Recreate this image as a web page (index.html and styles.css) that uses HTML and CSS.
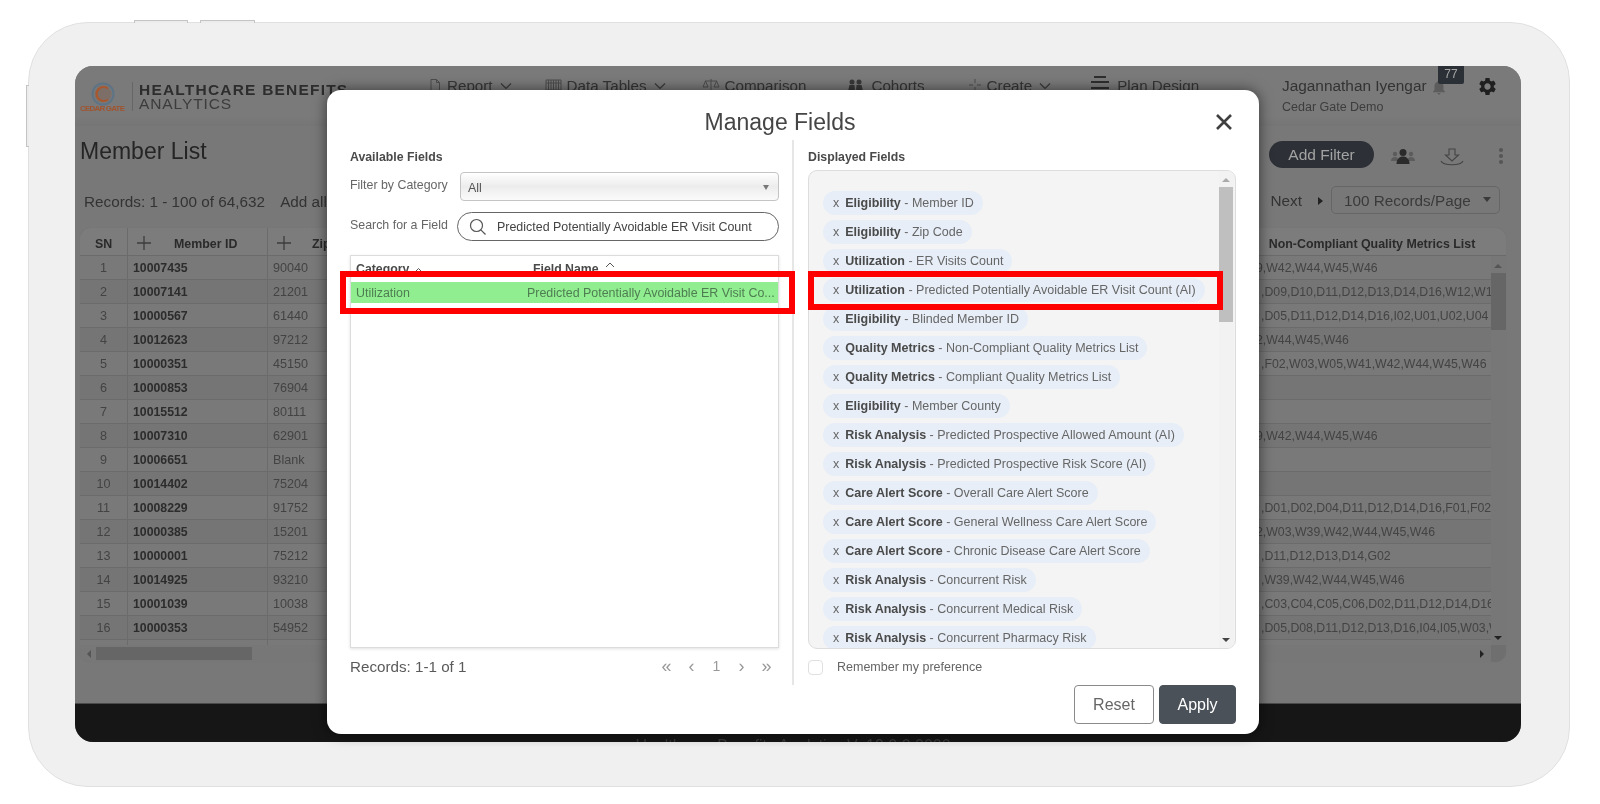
FILE: index.html
```html
<!DOCTYPE html>
<html lang="en">
<head>
<meta charset="utf-8">
<title>Manage Fields</title>
<link rel="stylesheet" href="styles.css">
</head>
<body>
<div class="bezel">
  <span class="hw hw-top1"></span><span class="hw hw-top2"></span><span class="hw hw-left"></span>
  <div class="screen">
    <header class="topbar">
      <svg class="logo" width="46" height="36" viewBox="0 0 46 36">
        <circle cx="23" cy="13" r="10.5" fill="none" stroke="#5d7386" stroke-width="2"/>
        <circle cx="23" cy="13" r="8.5" fill="#7d6f68"/>
        <path d="M28 7.500a7 7 0 1 0 0 11" fill="none" stroke="#a8572f" stroke-width="2.200"/>
        <text x="0" y="30" class="logo-text" textLength="45">CEDAR GATE</text>
      </svg>
      <div class="brand">
        <div class="brand-1">HEALTHCARE BENEFITS</div>
        <div class="brand-2">ANALYTICS</div>
      </div>
      <nav class="nav">
        <span class="nav-item"><svg width="14" height="14" viewBox="0 0 14 14" class="ico"><path d="M3 1.500h5.500L11.500 4.500V12.500H3zM8.500 1.500V4.500H11.500"/></svg>Report<svg class="chev" width="12" height="8" viewBox="0 0 12 8"><path d="M1 1.500L6 6.500L11 1.500"/></svg></span>
        <span class="nav-item"><svg width="17" height="14" viewBox="0 0 17 14" class="ico"><path d="M1 2h15v10H1zM1 5h15M6 2v10M11 2v10M3.500 2v10M8.500 2v10M13.500 2v10"/></svg>Data Tables<svg class="chev" width="12" height="8" viewBox="0 0 12 8"><path d="M1 1.500L6 6.500L11 1.500"/></svg></span>
        <span class="nav-item"><svg width="18" height="14" viewBox="0 0 18 14" class="ico"><path d="M9 1v12M3 3h12M3.500 3L1 9h5zM14.500 3L12 9h5zM5 13h8"/></svg>Comparison</span>
        <span class="nav-item"><svg width="21" height="14" viewBox="0 0 21 14" class="ico-fill"><circle cx="7" cy="4" r="2.500"/><circle cx="14" cy="4" r="2.500"/><path d="M3 13l1.500-6h5l.5 6zM11 13l.5-6h5l1.500 6z"/></svg>Cohorts</span>
        <span class="nav-item"><svg width="14" height="14" viewBox="0 0 14 14" class="ico"><path d="M7 1v4M7 9v4M1 7h4M9 7h4"/></svg>Create<svg class="chev" width="12" height="8" viewBox="0 0 12 8"><path d="M1 1.500L6 6.500L11 1.500"/></svg></span>
        <span class="nav-item"><svg width="18" height="16" viewBox="0 0 18 16" class="ico-bars"><path d="M3 2h12M0 7h18M0 13h18"/></svg>Plan Design</span>
      </nav>
      <div class="user">
        <div class="user-name">Jagannathan Iyengar</div>
        <div class="user-org">Cedar Gate Demo</div>
      </div>
      <svg class="bell" width="18" height="18" viewBox="0 0 24 24"><path d="M12 22c1.100 0 2-.9 2-2h-4c0 1.100.89 2 2 2zm6-6v-5c0-3.070-1.640-5.640-4.500-6.320V4c0-.83-.67-1.500-1.500-1.500s-1.500.67-1.500 1.500v.68C7.630 5.360 6 7.920 6 11v5l-2 2v1h16v-1l-2-2z"/></svg>
      <span class="badge">77</span>
      <svg class="gear" width="21" height="21" viewBox="0 0 24 24"><path d="M19.140 12.940c.04-.3.06-.61.06-.94 0-.32-.02-.64-.07-.94l2.030-1.580c.18-.14.23-.41.12-.61l-1.920-3.320c-.12-.22-.37-.29-.59-.22l-2.390.96c-.5-.38-1.030-.7-1.620-.94l-.36-2.540c-.04-.24-.24-.41-.48-.41h-3.840c-.24 0-.43.17-.47.41l-.36 2.540c-.59.24-1.130.57-1.620.94l-2.390-.96c-.22-.08-.47 0-.59.22L2.740 8.870c-.12.21-.08.47.12.61l2.030 1.580c-.05.3-.09.63-.09.94s.02.64.07.94l-2.030 1.580c-.18.14-.23.41-.12.61l1.920 3.320c.12.22.37.29.59.22l2.390-.96c.5.38 1.030.7 1.620.94l.36 2.540c.05.24.24.41.48.41h3.840c.24 0 .44-.17.47-.41l.36-2.540c.59-.24 1.130-.56 1.620-.94l2.390.96c.22.08.47 0 .59-.22l1.920-3.320c.12-.22.07-.47-.12-.61l-2.010-1.580zM12 15.600c-1.980 0-3.600-1.620-3.600-3.600s1.620-3.600 3.600-3.600 3.600 1.620 3.600 3.600-1.620 3.600-3.600 3.600z"/></svg>
    </header>

    <main class="content">
      <div class="title-row">
        <h1 class="page-title">Member List</h1>
        <button class="add-filter">Add Filter</button>
        <svg class="act-people" width="24" height="18" viewBox="0 0 24 18"><circle cx="4" cy="6" r="2.200" fill="#5c5c5c"/><circle cx="20" cy="6" r="2.200" fill="#5c5c5c"/><path d="M0 13c0-3 2-4 4-4s3 1 3 2v2zM24 13c0-3-2-4-4-4s-3 1-3 2v2z" fill="#5c5c5c"/><circle cx="12" cy="4.500" r="3.500" fill="#2b2b2b"/><path d="M5.500 16c0-5 3-7.500 6.500-7.500s6.500 2.500 6.500 7.500z" fill="#2b2b2b"/></svg>
        <svg class="act-down" width="24" height="18" viewBox="0 0 24 18"><path d="M9 1h6v6h3.500L12 13L5.500 7H9z" fill="none" stroke="#444" stroke-width="1.100"/><path d="M1 13c2 5 20 5 22 0" fill="none" stroke="#444" stroke-width="1.100"/></svg>
        <span class="act-dots"><i></i><i></i><i></i></span>
      </div>
      <div class="records-row">
        <span class="rec-count">Records: 1 - 100 of 64,632</span>
        <span class="rec-add">Add all</span>
        <span class="rec-next">Next</span>
        <span class="tri-right"></span>
        <span class="page-size">100 Records/Page<span class="tri-down"></span></span>
      </div>

      <section class="grid">
        <div class="g-head">
          <div class="c-sn">SN</div>
          <div class="c-id"><svg class="plus" width="16" height="16" viewBox="0 0 16 16"><path d="M8 1v14M1 8h14"/></svg><span class="h-id">Member ID</span></div>
          <div class="c-zip"><svg class="plus" width="16" height="16" viewBox="0 0 16 16"><path d="M8 1v14M1 8h14"/></svg><span class="h-zip">Zip Code</span></div>
          <div class="c-last">Non-Compliant Quality Metrics List</div>
        </div>
        <div class="g-body">
          <div class="g-rows">
            <div class="g-row"><div class="c-sn">1</div><div class="c-id">10007435</div><div class="c-zip">90040</div><div class="c-last"><span class="cut">9</span>,W42,W44,W45,W46</div></div>
            <div class="g-row"><div class="c-sn">2</div><div class="c-id">10007141</div><div class="c-zip">21201</div><div class="c-last">,D09,D10,D11,D12,D13,D14,D16,W12,W13,W14</div></div>
            <div class="g-row"><div class="c-sn">3</div><div class="c-id">10000567</div><div class="c-zip">61440</div><div class="c-last">,D05,D11,D12,D14,D16,I02,U01,U02,U04</div></div>
            <div class="g-row"><div class="c-sn">4</div><div class="c-id">10012623</div><div class="c-zip">97212</div><div class="c-last"><span class="cut">2</span>,W44,W45,W46</div></div>
            <div class="g-row"><div class="c-sn">5</div><div class="c-id">10000351</div><div class="c-zip">45150</div><div class="c-last">,F02,W03,W05,W41,W42,W44,W45,W46</div></div>
            <div class="g-row"><div class="c-sn">6</div><div class="c-id">10000853</div><div class="c-zip">76904</div><div class="c-last"></div></div>
            <div class="g-row"><div class="c-sn">7</div><div class="c-id">10015512</div><div class="c-zip">80111</div><div class="c-last"></div></div>
            <div class="g-row"><div class="c-sn">8</div><div class="c-id">10007310</div><div class="c-zip">62901</div><div class="c-last"><span class="cut">9</span>,W42,W44,W45,W46</div></div>
            <div class="g-row"><div class="c-sn">9</div><div class="c-id">10006651</div><div class="c-zip">Blank</div><div class="c-last"></div></div>
            <div class="g-row"><div class="c-sn">10</div><div class="c-id">10014402</div><div class="c-zip">75204</div><div class="c-last"></div></div>
            <div class="g-row"><div class="c-sn">11</div><div class="c-id">10008229</div><div class="c-zip">91752</div><div class="c-last">,D01,D02,D04,D11,D12,D14,D16,F01,F02</div></div>
            <div class="g-row"><div class="c-sn">12</div><div class="c-id">10000385</div><div class="c-zip">15201</div><div class="c-last"><span class="cut">2</span>,W03,W39,W42,W44,W45,W46</div></div>
            <div class="g-row"><div class="c-sn">13</div><div class="c-id">10000001</div><div class="c-zip">75212</div><div class="c-last">,D11,D12,D13,D14,G02</div></div>
            <div class="g-row"><div class="c-sn">14</div><div class="c-id">10014925</div><div class="c-zip">93210</div><div class="c-last">,W39,W42,W44,W45,W46</div></div>
            <div class="g-row"><div class="c-sn">15</div><div class="c-id">10001039</div><div class="c-zip">10038</div><div class="c-last">,C03,C04,C05,C06,D02,D11,D12,D14,D16,F01</div></div>
            <div class="g-row"><div class="c-sn">16</div><div class="c-id">10000353</div><div class="c-zip">54952</div><div class="c-last">,D05,D08,D11,D12,D13,D16,I04,I05,W03,W05</div></div>
            <div class="g-row"><div class="c-sn"></div><div class="c-id"></div><div class="c-zip"></div><div class="c-last"></div></div>
          </div>
          <div class="v-scroll"><span class="arr-up"></span><span class="v-thumb"></span><span class="arr-down"></span></div>
        </div>
        <div class="h-scroll"><span class="arr-left"></span><span class="h-thumb"></span><span class="arr-right"></span></div>
      </section>
    </main>

    <footer class="footer">Healthcare Benefits Analytics V: 19.0.0.0000</footer>

    <div class="modal">
      <div class="modal-head">
        <h2 class="modal-title">Manage Fields</h2>
        <svg class="modal-close" width="18" height="18" viewBox="0 0 18 18"><path d="M2 2L16 16M16 2L2 16"/></svg>
      </div>
      <div class="modal-body">
        <div class="col-left">
          <div class="col-label">Available Fields</div>
          <div class="form-row form-filter">
            <label class="form-label">Filter by Category</label>
            <div class="select">All<span class="select-arrow"></span></div>
          </div>
          <div class="form-row form-search">
            <label class="form-label">Search for a Field</label>
            <div class="search">
              <svg width="18" height="18" viewBox="0 0 18 18"><circle cx="7.500" cy="7.500" r="6" fill="none" stroke="#555" stroke-width="1.200"/><path d="M11.800 11.800L16.500 16.500" stroke="#555" stroke-width="1.200"/></svg>
              <span>Predicted Potentially Avoidable ER Visit Count</span>
            </div>
          </div>
          <div class="list">
            <div class="list-head">
              <span class="lh-cat">Category<svg width="9" height="6" viewBox="0 0 9 6"><path d="M1 5L4.500 1.500L8 5"/></svg></span>
              <span class="lh-name">Field Name<svg width="10" height="6" viewBox="0 0 10 6"><path d="M1 5L5 1L9 5"/></svg></span>
            </div>
            <div class="list-row"><span class="lr-cat">Utilization</span><span class="lr-name">Predicted Potentially Avoidable ER Visit Co...</span></div>
          </div>
          <div class="list-foot">
            <span class="list-count">Records: 1-1 of 1</span>
            <span class="pager"><span>«</span><span>‹</span><span class="pg-num">1</span><span>›</span><span>»</span></span>
          </div>
        </div>
        <div class="col-divider"></div>
        <div class="col-right">
          <div class="col-label">Displayed Fields</div>
          <div class="chips-box">
            <div class="chips">
              <span class="chip"><i>x</i><b>Eligibility</b> - Member ID</span>
              <span class="chip"><i>x</i><b>Eligibility</b> - Zip Code</span>
              <span class="chip"><i>x</i><b>Utilization</b> - ER Visits Count</span>
              <span class="chip"><i>x</i><b>Utilization</b> - Predicted Potentially Avoidable ER Visit Count (AI)</span>
              <span class="chip"><i>x</i><b>Eligibility</b> - Blinded Member ID</span>
              <span class="chip"><i>x</i><b>Quality Metrics</b> - Non-Compliant Quality Metrics List</span>
              <span class="chip"><i>x</i><b>Quality Metrics</b> - Compliant Quality Metrics List</span>
              <span class="chip"><i>x</i><b>Eligibility</b> - Member County</span>
              <span class="chip"><i>x</i><b>Risk Analysis</b> - Predicted Prospective Allowed Amount (AI)</span>
              <span class="chip"><i>x</i><b>Risk Analysis</b> - Predicted Prospective Risk Score (AI)</span>
              <span class="chip"><i>x</i><b>Care Alert Score</b> - Overall Care Alert Score</span>
              <span class="chip"><i>x</i><b>Care Alert Score</b> - General Wellness Care Alert Score</span>
              <span class="chip"><i>x</i><b>Care Alert Score</b> - Chronic Disease Care Alert Score</span>
              <span class="chip"><i>x</i><b>Risk Analysis</b> - Concurrent Risk</span>
              <span class="chip"><i>x</i><b>Risk Analysis</b> - Concurrent Medical Risk</span>
              <span class="chip"><i>x</i><b>Risk Analysis</b> - Concurrent Pharmacy Risk</span>
            </div>
            <div class="chips-scroll"><span class="cs-up"></span><span class="cs-thumb"></span><span class="cs-down"></span></div>
          </div>
          <label class="remember"><span class="check"></span>Remember my preference</label>
        </div>
      </div>
      <div class="modal-foot">
        <button class="btn-reset">Reset</button>
        <button class="btn-apply">Apply</button>
      </div>
      <span class="mark mark-left"></span>
      <span class="mark mark-right"></span>
    </div>
  </div>
</div>
</body>
</html>
```
FILE: styles.css
```css
* { box-sizing: border-box; }
html, body { margin: 0; padding: 0; height: 804px; overflow: hidden; background: #fff; }
body { font-family: "Liberation Sans", Arial, sans-serif; color: #333; }
h1, h2 { margin: 0; font-weight: 400; }
button { font-family: inherit; cursor: pointer; }

.bezel {
  position: relative;
  width: 1542px; height: 765px;
  margin: 22px 0 0 28px;
  padding: 43px 46px 42px;
  background: #f0f0f0;
  border: 1.500px solid #e0e0e0;
  border-radius: 60px;
  filter: blur(0.35px);
}
.hw { position: absolute; background: #ececec; border: 1px solid #c4c4c4; }
.hw-top1 { left: 105px; top: -3px; width: 54px; height: 3px; border-bottom: 0; }
.hw-top2 { left: 171px; top: -3px; width: 55px; height: 3px; border-bottom: 0; }
.hw-left { left: -3px; top: 62px; width: 3px; height: 62px; border-right: 0; }

.screen {
  position: relative;
  display: flex; flex-direction: column;
  width: 1446px; height: 676px;
  background: #787878;
  border-radius: 18px;
}

/* top bar */
.topbar {
  position: relative;
  display: flex; align-items: flex-start;
  height: 60px; flex: none;
  padding-left: 5px;
  background: linear-gradient(#7a7a7a, #7a7a7a 85%, #757575);
  border-radius: 18px 18px 0 0;
}
.logo { margin-top: 15px; flex: none; }
.logo-text { font-size: 8px; font-weight: 700; fill: #a0542f; font-family: "Liberation Sans", sans-serif; }
.brand {
  width: 296px; height: 29px;
  margin: 16px 0 0 6px; padding-left: 6px;
  border-left: 1px solid #666;
  flex: none;
}
.brand-1 { font-size: 15.500px; font-weight: 700; letter-spacing: 1.200px; line-height: 15px; color: #2d2d2d; white-space: nowrap; }
.brand-2 { font-size: 15.500px; letter-spacing: 0.900px; line-height: 14px; color: #3c3c3c; white-space: nowrap; }

.nav { display: flex; gap: 39px; padding-top: 10px; flex: none; }
.nav-item { display: flex; align-items: center; height: 18px; font-size: 15.200px; color: #353535; white-space: nowrap; }
.nav-item:nth-child(1) { margin-right: -6px; }
.nav-item:nth-child(2) { margin-right: -3px; }
.nav-item:nth-child(4) { margin-right: 4px; }
.nav-item:nth-child(5) { margin-right: 1px; }
.nav-item svg { flex: none; margin-right: 5px; }
.ico { fill: none; stroke: #4d4d4d; stroke-width: 1; }
.ico-fill { fill: #383838; }
.ico-bars { fill: none; stroke: #2e2e2e; stroke-width: 2; margin-top: -4px; margin-right: 8px !important; }
.nav-item .chev { margin: 2px 0 0 7px; fill: none; stroke: #3a3a3a; stroke-width: 1.200; }

.user { margin-left: auto; padding-top: 11px; width: 147px; flex: none; }
.user-name { font-size: 15.400px; line-height: 18px; color: #333; white-space: nowrap; }
.user-org { font-size: 12.500px; line-height: 16px; margin-top: 4px; color: #3d3d3d; white-space: nowrap; }
.bell { position: absolute; left: 1355px; top: 12px; fill: #5c5c5c; }
.badge {
  position: absolute; left: 1363px; top: 0;
  width: 26px; height: 18px;
  background: #2b3036; border-radius: 0 0 2px 2px;
  font-size: 12px; line-height: 17px; text-align: center; color: #a6a6a6;
}
.gear { margin: 10px 23px 0 48px; fill: #1f1f1f; flex: none; }

/* page */
.content { flex: 1; padding: 0 15px 0 5px; min-height: 0; }
.title-row { display: flex; align-items: center; height: 27px; margin-top: 15px; }
.page-title { font-size: 23px; line-height: 27px; color: #252525; margin: -6px auto 0 0; }
.add-filter {
  width: 105px; height: 27px; padding: 0;
  background: #2d3137; color: #a3a3a3;
  border: 0; border-radius: 14px; font-size: 15.500px;
}
.act-people { margin: 4px 0 0 17px; flex: none; }
.act-down { margin: 4px 0 0 25px; flex: none; }
.act-dots { display: flex; flex-direction: column; gap: 2px; width: 4px; margin: 2px 3px 0 35px; flex: none; }
.act-dots i { width: 4px; height: 4px; border-radius: 50%; background: #555; }

.records-row { display: flex; align-items: center; height: 28px; margin-top: 18px; padding-right: 6px; font-size: 15.300px; color: #333; }
.rec-count { margin: 4px 0 0 4px; }
.rec-add { margin: 4px auto 0 15px; }
.rec-next { margin: 2px 16px 0 0; }
.tri-right { width: 0; height: 0; border-left: 5px solid #222; border-top: 4.500px solid transparent; border-bottom: 4.500px solid transparent; margin: 2px 8px 0 0; }
.page-size {
  position: relative;
  width: 169px; height: 28px; padding-left: 12px;
  border: 1px solid #666; border-radius: 5px;
  line-height: 28px; color: #3a3a3a;
}
.tri-down { position: absolute; right: 8px; top: 10px; width: 0; height: 0; border-top: 5px solid #3a3a3a; border-left: 4px solid transparent; border-right: 4px solid transparent; }

.grid {
  display: flex; flex-direction: column;
  height: 434px; margin-top: 14px;
  background: #7a7a7a;
  border-radius: 11px;
  box-shadow: 0 0 1px #6d6d6d;
  overflow: hidden;
}
.g-head, .g-row { display: grid; grid-template-columns: 48px 140px 985px 238px; }
.g-head { height: 28px; flex: none; border-bottom: 1px solid #6b6b6b; font-size: 12.400px; font-weight: 700; color: #2a2a2a; padding: 4px 15px 0 0; background: #7c7c7c; }
.g-head > div { display: flex; align-items: center; }
.g-head .c-sn { justify-content: center; margin-top: -4px; padding-top: 4px; }
.g-head .c-last { justify-content: center; white-space: nowrap; border: 0; }
.g-head .c-id, .g-head .c-zip { padding-left: 8px; }
.g-head .c-id { margin-top: -4px; padding-top: 4px; }
.plus { fill: none; stroke: #3c3c3c; stroke-width: 1.300; margin-top: -2px; flex: none; }
.h-id { margin-left: 22px; }
.h-zip { margin-left: 20px; white-space: nowrap; }
.c-sn, .c-id { border-right: 1px solid #6b6b6b; }
.g-body { display: flex; flex: 1; min-height: 0; }
.g-rows { width: 1411px; overflow: hidden; }
.g-row { height: 24px; border-bottom: 1px solid #6b6b6b; font-size: 12.600px; line-height: 25px; color: #434343; background: #797979; }
.g-row:nth-child(even) { background: #757575; }
.g-row .c-sn { text-align: center; }
.g-row .c-id { padding-left: 5px; font-size: 12.300px; font-weight: 700; color: #2c2c2c; }
.g-row .c-zip { padding-left: 5px; }
.g-row .c-last { padding-left: 8px; font-size: 12.300px; white-space: nowrap; overflow: hidden; }
.cut { margin-left: -5px; }
.v-scroll { position: relative; width: 15px; flex: none; background: #777; }
.v-thumb { position: absolute; left: 0; top: 17px; width: 15px; height: 57px; background: #666; }
.arr-up, .arr-down { position: absolute; left: 3px; width: 0; height: 0; border-left: 4px solid transparent; border-right: 4px solid transparent; }
.arr-up { top: 8px; border-bottom: 4px solid #555; }
.arr-down { bottom: 5px; border-top: 4px solid #222; }
.h-scroll { position: relative; height: 17px; flex: none; background: #777; }
.h-thumb { position: absolute; left: 16px; top: 2px; width: 156px; height: 13px; background: #666; }
.arr-left, .arr-right { position: absolute; top: 5px; width: 0; height: 0; border-top: 4px solid transparent; border-bottom: 4px solid transparent; }
.arr-left { left: 7px; border-right: 4px solid #555; }
.arr-right { right: 22px; border-left: 4px solid #222; }
.h-scroll::after { content: ""; position: absolute; right: 0; top: 0; width: 15px; height: 17px; background: #6f6f6f; }

.footer {
  height: 39px; flex: none;
  padding: 33px 10px 0 0;
  background: #161616;
  border-top: 1px solid #4a4a4a;
  border-radius: 0 0 18px 18px;
  overflow: hidden;
  font-size: 16px; line-height: 18px; text-align: center; color: #3a3a3a;
}

/* modal */
.modal {
  position: absolute; left: 252px; top: 24px;
  display: flex; flex-direction: column;
  width: 932px; height: 644px;
  background: #fff;
  border-radius: 14px;
  box-shadow: 0 0 14px rgba(0,0,0,.55);
}
.modal-head { position: relative; height: 50px; flex: none; text-align: center; padding-right: 26px; }
.modal-title { font-size: 23px; line-height: 64px; color: #454545; }
.modal-close { position: absolute; right: 26px; top: 23px; fill: none; stroke: #3f3f3f; stroke-width: 2.600; }
.modal-body { display: flex; height: 545px; flex: none; padding-left: 23px; }
.col-left { width: 429px; flex: none; }
.col-divider { width: 2px; margin: 0 14px 0 13px; background: #e6e6e6; flex: none; }
.col-right { width: 428px; flex: none; }
.col-label { margin-top: 9px; font-size: 12.300px; font-weight: 700; line-height: 16px; color: #4a4a4a; }
.form-row { display: flex; }
.form-filter { height: 29px; margin-top: 7px; }
.form-search { height: 29px; margin-top: 11px; }
.form-label { width: 108px; flex: none; font-size: 12.400px; line-height: 26px; color: #666; white-space: nowrap; }
.select {
  position: relative;
  width: 319px; height: 29px; margin-left: 2px; padding: 2px 0 0 7px;
  border: 1px solid #c4c4c4; border-radius: 4px;
  background: linear-gradient(#fff, #ececec 50%, #fbfbfb);
  font-size: 12.500px; line-height: 26px; color: #555;
}
.select-arrow { position: absolute; right: 9px; top: 12px; width: 0; height: 0; border-top: 5px solid #777; border-left: 3.500px solid transparent; border-right: 3.500px solid transparent; }
.search {
  display: flex; align-items: center;
  width: 323px; height: 29px; margin-left: -1px; padding-left: 11px;
  border: 1px solid #666; border-radius: 15px;
  font-size: 12.450px; color: #444; white-space: nowrap;
}
.search span { margin-left: 10px; }
.list { height: 393px; margin-top: 14px; border: 1px solid #dcdcdc; box-shadow: 0 1px 3px rgba(0,0,0,.12); }
.list-head { display: flex; height: 26px; padding: 6px 0 0 5px; font-size: 12.300px; font-weight: 700; line-height: 14px; color: #4a4a4a; }
.list-head svg { fill: none; stroke: #555; stroke-width: 1; }
.lh-cat { width: 177px; flex: none; }
.lh-cat svg { margin-left: 5px; }
.lh-name svg { margin-left: 6px; vertical-align: 5px; }
.list-row { display: flex; height: 21px; background: #90ee90; font-size: 12.450px; line-height: 22px; color: #4f7d52; padding-left: 5px; }
.lr-cat { width: 171px; flex: none; }
.lr-name { white-space: nowrap; }
.list-foot { display: flex; justify-content: space-between; align-items: center; height: 18px; margin-top: 9px; }
.list-count { font-size: 15.200px; color: #5a5a5a; }
.pager { display: flex; font-size: 18px; color: #999; }
.pager span { width: 25px; text-align: center; line-height: 18px; }
.pager .pg-num { font-size: 14px; }

.chips-box { display: flex; height: 479px; margin-top: 5px; background: #f4f4f4; border: 1px solid #ddd; border-radius: 9px; overflow: hidden; }
.chips { display: flex; flex-direction: column; align-items: flex-start; gap: 5px; flex: 1; padding: 20px 0 0 14px; overflow: hidden; }
.chip { flex: none; height: 24px; padding: 0 9px 0 10px; background: #e7eef7; border-radius: 12px; font-size: 12.500px; line-height: 24px; color: #666; white-space: nowrap; }
.chip i { font-style: normal; margin-right: 6px; color: #666; }
.chip b { color: #4a4a4a; }
.chips-scroll { position: relative; width: 15px; flex: none; background: #f2f2f2; margin-right: 1px; }
.cs-thumb { position: absolute; left: 0; top: 16px; width: 14px; height: 135px; background: #bfbfbf; }
.cs-up, .cs-down { position: absolute; left: 3px; width: 0; height: 0; border-left: 4px solid transparent; border-right: 4px solid transparent; }
.cs-up { top: 7px; border-bottom: 4px solid #aaa; }
.cs-down { bottom: 6px; border-top: 4px solid #444; }
.remember { display: flex; align-items: center; height: 16px; margin-top: 10px; font-size: 12.500px; color: #666; }
.check { width: 15px; height: 15px; margin-right: 14px; border: 1px solid #e0e0e0; border-radius: 4px; background: #fff; }

.modal-foot { display: flex; justify-content: flex-end; gap: 5px; padding-right: 23px; }
.btn-reset, .btn-apply { height: 39px; padding: 0; font-size: 16px; border-radius: 4px; }
.btn-reset { width: 80px; background: #fff; border: 1px solid #8a8a8a; color: #666; }
.btn-apply { width: 77px; background: #4b5159; border: 1px solid #4b5159; color: #fff; }

.mark { position: absolute; border: 6px solid #f00; pointer-events: none; }
.mark-left { left: 13px; top: 181px; width: 455px; height: 43px; }
.mark-right { left: 481px; top: 181px; width: 415px; height: 39px; }
```
